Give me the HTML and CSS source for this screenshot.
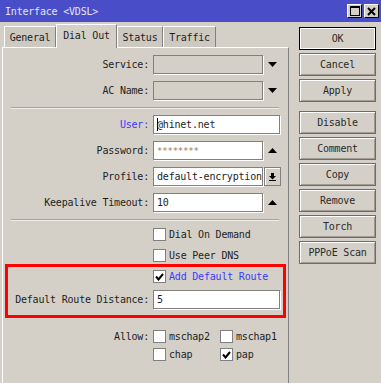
FILE: index.html
```html
<!DOCTYPE html>
<html lang="en">
<head>
    <meta charset="UTF-8">
    <title>Interface &lt;VDSL&gt;</title>
    <link rel="stylesheet" href="styles.css">
</head>
<body>

    <div class="titleBar">
        <span class="titleText">Interface &lt;VDSL&gt;</span>
        <div class="titleBtns">
            <span class="titleBtn">
                <svg width="10" height="10" viewBox="0 0 10 10"><rect x="0.5" y="0.5" width="9" height="9" fill="none" stroke="#000"/><rect x="0" y="0" width="10" height="2" fill="#000"/></svg>
            </span>
            <span class="titleBtn">
                <svg width="9" height="9" viewBox="0 0 9 9"><path d="M1 1L8 8M8 1L1 8" stroke="#000" stroke-width="2"/></svg>
            </span>
        </div>
    </div>

    <div class="mainWrap">
        <div class="leftWrap">
            <div class="tabs">
                <div class="tab tabGeneral">General</div>
                <div class="tab tabActive">Dial Out</div>
                <div class="tab tabStatus">Status</div>
                <div class="tab tabTraffic">Traffic</div>
            </div>

            <div class="panel">
                <div class="row">
                    <div class="label">Service:</div>
                    <div class="field disabled"></div>
                    <div class="arrow"><svg width="9" height="5"><path d="M0 0H9L4.5 5Z" fill="#000"/></svg></div>
                </div>
                <div class="row">
                    <div class="label">AC Name:</div>
                    <div class="field disabled"></div>
                    <div class="arrow"><svg width="9" height="5"><path d="M0 0H9L4.5 5Z" fill="#000"/></svg></div>
                </div>

                <div class="sep"></div>

                <div class="row">
                    <div class="label blue">User:</div>
                    <div class="field wide"><span class="caret"></span>@hinet.net</div>
                </div>
                <div class="row">
                    <div class="label">Password:</div>
                    <div class="field"><span class="stars">********</span></div>
                    <div class="arrow"><svg width="9" height="5"><path d="M0 5H9L4.5 0Z" fill="#000"/></svg></div>
                </div>
                <div class="row">
                    <div class="label">Profile:</div>
                    <div class="field clip">default-encryption</div>
                    <div class="dropBtn">
                        <svg width="7" height="8" viewBox="0 0 7 8"><rect x="2" y="0" width="3" height="3" fill="#000"/><path d="M0 3H7L3.5 6.5Z" fill="#000"/><rect x="0" y="7" width="7" height="1" fill="#000"/></svg>
                    </div>
                </div>
                <div class="row">
                    <div class="label">Keepalive Timeout:</div>
                    <div class="field">10</div>
                    <div class="arrow"><svg width="9" height="5"><path d="M0 5H9L4.5 0Z" fill="#000"/></svg></div>
                </div>

                <div class="sep sepTwo"></div>

                <div class="checkRow">
                    <div class="spacer"></div>
                    <span class="box"></span>
                    <span class="checkText">Dial On Demand</span>
                </div>
                <div class="checkRow">
                    <div class="spacer"></div>
                    <span class="box"></span>
                    <span class="checkText">Use Peer DNS</span>
                </div>

                <div class="redBox">
                    <div class="checkRow">
                        <div class="spacer small"></div>
                        <span class="box"><svg width="9" height="8" viewBox="0 0 9 8"><path d="M1 3.5L3.5 6.5L8 1" fill="none" stroke="#000" stroke-width="2"/></svg></span>
                        <span class="checkText blue">Add Default Route</span>
                    </div>
                    <div class="row last">
                        <div class="label small">Default Route Distance:</div>
                        <div class="field wide">5</div>
                    </div>
                </div>

                <div class="checkRow allow">
                    <div class="label">Allow:</div>
                    <div class="opt">
                        <span class="box"></span>
                        <span class="checkText">mschap2</span>
                    </div>
                    <div class="opt">
                        <span class="box"></span>
                        <span class="checkText">mschap1</span>
                    </div>
                </div>
                <div class="checkRow">
                    <div class="spacer"></div>
                    <div class="opt">
                        <span class="box"></span>
                        <span class="checkText">chap</span>
                    </div>
                    <div class="opt">
                        <span class="box"><svg width="9" height="8" viewBox="0 0 9 8"><path d="M1 3.5L3.5 6.5L8 1" fill="none" stroke="#000" stroke-width="2"/></svg></span>
                        <span class="checkText">pap</span>
                    </div>
                </div>
            </div>
        </div>

        <div class="btnCol">
            <div class="btn btnDefault">OK</div>
            <div class="btn">Cancel</div>
            <div class="btn">Apply</div>
            <div class="btn btnGap">Disable</div>
            <div class="btn">Comment</div>
            <div class="btn">Copy</div>
            <div class="btn">Remove</div>
            <div class="btn">Torch</div>
            <div class="btn">PPPoE Scan</div>
        </div>
    </div>

</body>
</html>
```

FILE: styles.css
```css
body{
    margin: 0;
    width: 381px;
    height: 383px;
    overflow: hidden;
    background-color: #d4d0c8;
    font-family: "DejaVu Sans Mono", "Liberation Mono", monospace;
    font-size: 10px;
    letter-spacing: -0.2px;
    color: #1e1e1e;
}

.titleBar{
    height: 22px;
    background-color: #4a4dc8;
    display: flex;
    align-items: center;
    justify-content: space-between;
    padding-left: 5px;
    padding-right: 2px;
}

.titleText{
    color: #e4e4f4;
}

.titleBtns{
    display: flex;
    gap: 2px;
}

.titleBtn{
    width: 15px;
    height: 14px;
    box-sizing: border-box;
    background-color: #d4d0c8;
    border-top: 1px solid #fff;
    border-left: 1px solid #fff;
    border-right: 1px solid #000;
    border-bottom: 1px solid #000;
    display: flex;
    align-items: center;
    justify-content: center;
}

.mainWrap{
    display: flex;
    padding-left: 2px;
}

.leftWrap{
    width: 287px;
}

.tabs{
    height: 25px;
    display: flex;
    align-items: flex-end;
    padding-left: 2px;
}

.tab{
    height: 21px;
    box-sizing: border-box;
    border-top: 1px solid #fff;
    border-left: 1px solid #fff;
    border-right: 1px solid #808080;
    display: flex;
    align-items: center;
    justify-content: center;
    background-color: #cdc9c1;
}

.tabGeneral{
    width: 52px;
}

.tabActive{
    width: 61px;
    height: 24px;
    margin-bottom: -1px;
    padding-bottom: 3px;
    background-color: #d4d0c8;
    position: relative;
    z-index: 1;
}

.tabStatus{
    width: 46px;
}

.tabTraffic{
    width: 53px;
}

.panel{
    height: 340px;
    box-sizing: border-box;
    border-top: 1px solid #fff;
    border-left: 1px solid #fff;
    border-right: 1px solid #808080;
    padding-top: 7px;
}

.row{
    display: flex;
    align-items: center;
    height: 19px;
    margin-bottom: 7px;
}

.label{
    width: 146px;
    text-align: right;
    margin-right: 4px;
    white-space: nowrap;
}

.label.small{
    width: 141px;
}

.blue{
    color: #3a3aff;
}

.field{
    width: 110px;
    height: 19px;
    box-sizing: border-box;
    border: 1px solid #808080;
    box-shadow: 1px 1px 0 #fff;
    background-color: #fff;
    padding-left: 3px;
    display: flex;
    align-items: center;
    white-space: nowrap;
    overflow: hidden;
}

.field.wide{
    width: 127px;
}

.field.disabled{
    background-color: #d4d0c8;
}

.caret{
    width: 1px;
    height: 13px;
    background-color: #000;
    margin-right: -1px;
}

.stars{
    color: #9a7a4a;
    font-size: 9px;
}

.arrow{
    width: 18px;
    display: flex;
    justify-content: center;
}

.dropBtn{
    width: 17px;
    height: 19px;
    margin-left: 1px;
    box-sizing: border-box;
    border: 1px solid #808080;
    box-shadow: inset 1px 1px 0 #fff;
    display: flex;
    align-items: center;
    justify-content: center;
}

.sep{
    width: 268px;
    margin-left: 8px;
    margin-top: 2px;
    margin-bottom: 6px;
    border-top: 1px solid #a8a49c;
    border-bottom: 1px solid #f0eee8;
}

.sepTwo{
    margin-bottom: 7px;
}

.checkRow{
    display: flex;
    align-items: center;
    height: 13px;
    margin-bottom: 8px;
}

.spacer{
    width: 150px;
}

.spacer.small{
    width: 145px;
}

.box{
    width: 13px;
    height: 13px;
    box-sizing: border-box;
    background-color: #fff;
    border: 1px solid #808080;
    display: flex;
    align-items: center;
    justify-content: center;
}

.checkText{
    margin-left: 3px;
}

.opt{
    width: 67px;
    display: flex;
    align-items: center;
}

.redBox{
    width: 281px;
    box-sizing: border-box;
    margin-left: 2px;
    margin-top: -6px;
    border: 3px solid #ff0000;
    padding-top: 3px;
    padding-bottom: 6px;
    margin-bottom: 12px;
}

.redBox .checkRow{
    margin-bottom: 7px;
}

.row.last{
    margin-bottom: 0;
}

.allow{
    margin-bottom: 5px;
}

.btnCol{
    margin-left: 10px;
    padding-top: 5px;
    display: flex;
    flex-direction: column;
    gap: 3px;
}

.btn{
    width: 77px;
    height: 23px;
    box-sizing: border-box;
    border: 1px solid #6c6c6c;
    box-shadow: inset 1px 1px 0 #fff, inset -1px -1px 0 #a09c94;
    display: flex;
    align-items: center;
    justify-content: center;
    color: #2a2a2a;
}

.btnDefault{
    border: 1px solid #000;
    box-shadow: inset 0 0 0 1px #fff;
}

.btnGap{
    margin-top: 6px;
}
```
